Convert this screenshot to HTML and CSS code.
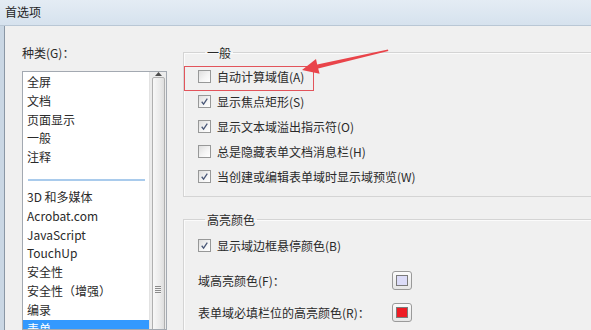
FILE: index.html
```html
<!DOCTYPE html>
<html lang="zh-CN">
<head>
    <meta charset="UTF-8">
    <title>首选项</title>
    <link rel="stylesheet" href="styles.css">
</head>
<body>
    <div class="titlebar">首选项</div>

    <div class="window">
        <!-- Список категорий -->
        <aside class="sidebar">
            <div class="sidebar-label">种类(G)：</div>
            <div class="listbox">
                <ul class="list">
                    <li>全屏</li>
                    <li>文档</li>
                    <li>页面显示</li>
                    <li>一般</li>
                    <li>注释</li>
                    <li class="separator"></li>
                    <li>3D 和多媒体</li>
                    <li>Acrobat.com</li>
                    <li>JavaScript</li>
                    <li>TouchUp</li>
                    <li>安全性</li>
                    <li>安全性（增强）</li>
                    <li>编录</li>
                    <li class="selected">表单</li>
                </ul>
                <div class="scrollbar">
                    <div class="scroll-arrow">
                        <svg width="7" height="4" viewBox="0 0 7 4"><path d="M0 4 L3.5 0 L7 4 Z" fill="#4d4d4d"/></svg>
                    </div>
                    <div class="scroll-thumb">
                        <span class="grip"></span>
                    </div>
                </div>
            </div>
        </aside>

        <!-- Настройки -->
        <section class="panel">
            <fieldset class="group group-general">
                <legend>一般</legend>
                <label class="check-row">
                    <span class="checkbox"></span>自动计算域值(A)
                    <span class="callout"></span>
                </label>
                <label class="check-row">
                    <span class="checkbox checked"><svg viewBox="0 0 13 13"><path d="M3.2 6.8 L5.4 9.6 L9.8 3.2"/></svg></span>显示焦点矩形(S)
                </label>
                <label class="check-row">
                    <span class="checkbox checked"><svg viewBox="0 0 13 13"><path d="M3.2 6.8 L5.4 9.6 L9.8 3.2"/></svg></span>显示文本域溢出指示符(O)
                </label>
                <label class="check-row">
                    <span class="checkbox"></span>总是隐藏表单文档消息栏(H)
                </label>
                <label class="check-row">
                    <span class="checkbox checked"><svg viewBox="0 0 13 13"><path d="M3.2 6.8 L5.4 9.6 L9.8 3.2"/></svg></span>当创建或编辑表单域时显示域预览(W)
                </label>
            </fieldset>

            <fieldset class="group group-colors">
                <legend>高亮颜色</legend>
                <label class="check-row">
                    <span class="checkbox checked"><svg viewBox="0 0 13 13"><path d="M3.2 6.8 L5.4 9.6 L9.8 3.2"/></svg></span>显示域边框悬停颜色(B)
                </label>
                <div class="color-row">
                    <span class="color-label">域高亮颜色(F)：</span>
                    <span class="swatch"><span class="swatch-fill swatch-lavender"></span></span>
                </div>
                <div class="color-row">
                    <span class="color-label">表单域必填栏位的高亮颜色(R)：</span>
                    <span class="swatch"><span class="swatch-fill swatch-red"></span></span>
                </div>
            </fieldset>
        </section>
    </div>

    <!-- Стрелка-подсказка -->
    <svg class="pointer-arrow" width="591" height="330" viewBox="0 0 591 330">
        <polygon points="302,70 316,59 317.2,64.4 388,49.4 388.3,51 318.2,68.4 319.6,73.8" fill="#e9444a"/>
    </svg>
</body>
</html>
```

FILE: styles.css
```css
* {
    margin: 0;
    padding: 0;
    box-sizing: border-box;
}

body {
    width: 591px;
    height: 330px;
    overflow: hidden;
    position: relative;
    font-family: "Noto Sans CJK SC", "Noto Sans", sans-serif;
    font-size: 12px;
    color: #2a2a2a;
    background: #f0f0f0;
}

.titlebar {
    height: 26px;
    line-height: 23px;
    padding-left: 5px;
    color: #1e1e1e;
    background: linear-gradient(180deg, #e4ecf4 0%, #d6e2ee 100%);
    border-bottom: 1px solid #b9c7d5;
}

.window {
    display: flex;
    height: 304px;
    overflow: hidden;
    border-left: 4px solid #cad7e4;
    background: #f0f0f0;
}

/* Левая колонка */
.sidebar {
    width: 163px;
    flex-shrink: 0;
    display: flex;
    flex-direction: column;
    padding: 18px 0 0 17px;
    border-left: 1px solid #8a97a5;
}

.sidebar-label {
    line-height: 17px;
    margin-bottom: 10px;
}

.listbox {
    flex: 1;
    display: flex;
    width: 145px;
    background: #ffffff;
    border: 1px solid #a3a9b1;
    overflow: hidden;
}

.list {
    list-style: none;
    flex: 1;
    padding-top: 1px;
}

.list li {
    line-height: 18.8px;
    padding-left: 4px;
    white-space: nowrap;
}

.list li.separator {
    height: 21px;
    padding-top: 12px;
    padding-left: 5px;
}

.list li.separator::before {
    content: "";
    display: block;
    width: 117px;
    height: 2px;
    background: #a9cbec;
}

.list li.selected {
    background: #3399ff;
    color: #ffffff;
}

.scrollbar {
    width: 17px;
    flex-shrink: 0;
    display: flex;
    flex-direction: column;
    align-items: center;
    background: #ececec;
    border-left: 1px solid #e2e2e2;
}

.scroll-arrow {
    height: 19px;
    display: flex;
    align-items: center;
    justify-content: center;
}

.scroll-thumb {
    margin-top: 1px;
    width: 13px;
    height: 426px;
    flex-shrink: 0;
    display: flex;
    align-items: center;
    justify-content: center;
    border: 1px solid #b0b0b0;
    border-radius: 2px;
    background: linear-gradient(90deg, #f8f8f8 0%, #ebebeb 60%, #dedede 100%);
}

.grip {
    width: 6px;
    height: 8px;
    background: repeating-linear-gradient(180deg, #8a8a8a 0, #8a8a8a 1px, #f2f2f2 1px, #f2f2f2 2px);
}

/* Правая колонка */
.panel {
    flex: 1;
    padding: 18px 0 0 16px;
}

.group {
    margin-right: -12px;
    border: 1px solid #d4d4d4;
    box-shadow: inset 1px 1px 0 #fbfbfb;
    padding: 3px 0 7px 14px;
    min-width: 0;
}

.group legend {
    margin-left: 7px;
    padding: 0 2px;
    line-height: 17px;
}

.group-colors {
    margin-top: 14px;
    padding-top: 5px;
    padding-bottom: 4px;
}

.check-row {
    position: relative;
    display: flex;
    align-items: center;
    height: 25px;
    white-space: nowrap;
}

.checkbox {
    width: 13px;
    height: 13px;
    margin-right: 6px;
    flex-shrink: 0;
    border: 1px solid #979898;
    background: linear-gradient(135deg, #dedede 0%, #f4f4f4 55%, #ffffff 100%);
}

.checkbox svg {
    display: block;
    width: 11px;
    height: 11px;
}

.checkbox svg path {
    fill: none;
    stroke: #4a5878;
    stroke-width: 1.5;
}

.callout {
    position: absolute;
    left: -14px;
    top: 2px;
    width: 130px;
    height: 25px;
    border: 1.5px solid #e2545b;
}

.color-row {
    display: flex;
    align-items: center;
    height: 32px;
}

.color-row:first-of-type {
    margin-top: 6px;
}

.color-label {
    width: 194px;
    white-space: nowrap;
}

.swatch {
    width: 20px;
    height: 19px;
    padding: 3px;
    border: 1px solid #9a9a9a;
    border-radius: 3px;
    background: linear-gradient(180deg, #fbfbfb 0%, #e6e6e6 100%);
}

.swatch-fill {
    display: block;
    width: 100%;
    height: 100%;
    border: 1px solid #7b7b7b;
}

.swatch-lavender {
    background: #dcdcf8;
}

.swatch-red {
    background: #ee1c24;
}

.pointer-arrow {
    position: absolute;
    top: 0;
    left: 0;
    pointer-events: none;
}
```
